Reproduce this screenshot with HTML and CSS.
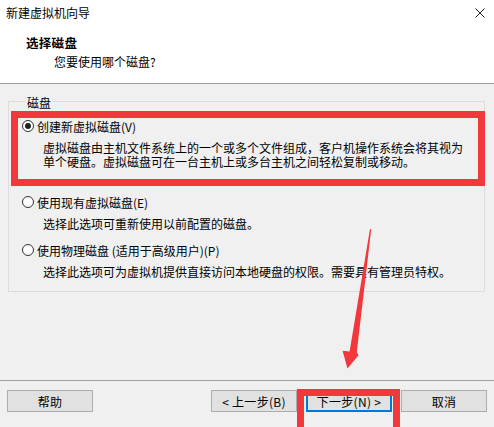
FILE: index.html
```html
<!DOCTYPE html>
<html lang="zh-CN">
<head>
    <meta charset="UTF-8">
    <meta name="viewport" content="width=device-width, initial-scale=1.0">
    <title>新建虚拟机向导</title>
    <link rel="stylesheet" href="styles.css">
</head>
<body>
    <div class="window">
        <div class="top">
            <div class="titlebar">
                <span>新建虚拟机向导</span>
                <svg class="close" width="10" height="10" viewBox="0 0 10 10">
                    <path d="M0.5 0.5 L9.5 9.5 M9.5 0.5 L0.5 9.5" stroke="#222" stroke-width="1" fill="none"/>
                </svg>
            </div>
            <div class="head">
                <div class="head-title">选择磁盘</div>
                <div class="head-sub">您要使用哪个磁盘?</div>
            </div>
        </div>

        <fieldset class="group">
            <legend>磁盘</legend>

            <div class="opt opt-long">
                <div class="opt-row"><span class="radio checked"></span>创建新虚拟磁盘(V)</div>
                <p class="desc">虚拟磁盘由主机文件系统上的一个或多个文件组成，客户机操作系统会将其视为<br>单个硬盘。虚拟磁盘可在一台主机上或多台主机之间轻松复制或移动。</p>
            </div>

            <div class="opt">
                <div class="opt-row"><span class="radio"></span>使用现有虚拟磁盘(E)</div>
                <p class="desc">选择此选项可重新使用以前配置的磁盘。</p>
            </div>

            <div class="opt">
                <div class="opt-row"><span class="radio"></span>使用物理磁盘 (适用于高级用户)(P)</div>
                <p class="desc">选择此选项可为虚拟机提供直接访问本地硬盘的权限。需要具有管理员特权。</p>
            </div>
        </fieldset>

        <div class="footer">
            <button class="btn">帮助</button>
            <div class="nav">
                <button class="btn">&lt; 上一步(B)</button>
                <button class="btn btn-default">下一步(N) &gt;</button>
                <button class="btn">取消</button>
            </div>
        </div>

        <!-- red annotation marks drawn over the dialog -->
        <svg class="marks" width="494" height="427" viewBox="0 0 494 427">
            <rect x="14.5" y="114.5" width="467" height="68" fill="none" stroke="#f2383c" stroke-width="7"/>
            <rect x="300.5" y="392.5" width="96" height="45" fill="none" stroke="#f2383c" stroke-width="7"/>
            <polygon points="370.5,229 371.2,229.5 356.8,352 358.6,355.2 347.4,368.6 342.6,350.8 349.6,351.6 369.9,229.4" fill="#f2383c"/>
        </svg>
    </div>
</body>
</html>
```

FILE: styles.css
```css
body {
    margin: 0;
    background-color: #f0f0f0;
    font-family: "Noto Sans CJK SC", "Noto Sans", sans-serif;
    font-size: 12px;
    color: #000;
}
.window {
    position: relative;
    width: 494px;
    height: 427px;
    display: flex;
    flex-direction: column;
    overflow: hidden;
}
.top {
    background: #fff;
    height: 83px;
    border-bottom: 1px solid #a0a0a0;
}
.titlebar {
    height: 26px;
    line-height: 26px;
    padding: 0 9px 0 6px;
    display: flex;
    justify-content: space-between;
    align-items: center;
}
.head {
    padding: 9px 0 0 26px;
}
.head-title {
    font-weight: bold;
    font-size: 12.5px;
    line-height: 16px;
    letter-spacing: 0.3px;
}
.head-sub {
    margin: 3px 0 0 28px;
    line-height: 16px;
}
.group {
    margin: 9px 9px 0 8px;
    padding: 9px 13px 0;
    border: 1px solid #dcdcdc;
    height: 199px;
    box-sizing: border-box;
    min-width: 0;
}
.group legend {
    padding: 4px 2px 0;
    margin-left: 3px;
    line-height: 12px;
}
.opt + .opt {
    margin-top: 11px;
}
.opt-long {
    margin-bottom: 25px;
}
.opt-row {
    display: flex;
    align-items: center;
    gap: 3px;
    height: 16px;
    white-space: nowrap;
}
.radio {
    width: 12px;
    height: 12px;
    box-sizing: border-box;
    border: 1px solid #333;
    border-radius: 50%;
    background: #fff;
    display: flex;
    align-items: center;
    justify-content: center;
}
.radio.checked::after {
    content: "";
    width: 6px;
    height: 6px;
    border-radius: 50%;
    background: #222;
}
.desc {
    margin: 7px 0 0 21px;
    line-height: 14px;
    white-space: nowrap;
}
.footer {
    margin-top: auto;
    height: 37px;
    border-top: 1px solid #a0a0a0;
    padding: 9px 7px 0;
    display: flex;
    justify-content: space-between;
    align-items: flex-start;
}
.nav {
    display: flex;
    gap: 9px;
}
.btn {
    width: 86px;
    height: 22px;
    padding: 0;
    background: #e1e1e1;
    border: 1px solid #adadad;
    font-family: inherit;
    font-size: 12px;
    letter-spacing: 0.3px;
    color: #000;
}
.btn-default {
    border: 2px solid #0078d7;
}
.marks {
    position: absolute;
    left: 0;
    top: 0;
    pointer-events: none;
}
```
